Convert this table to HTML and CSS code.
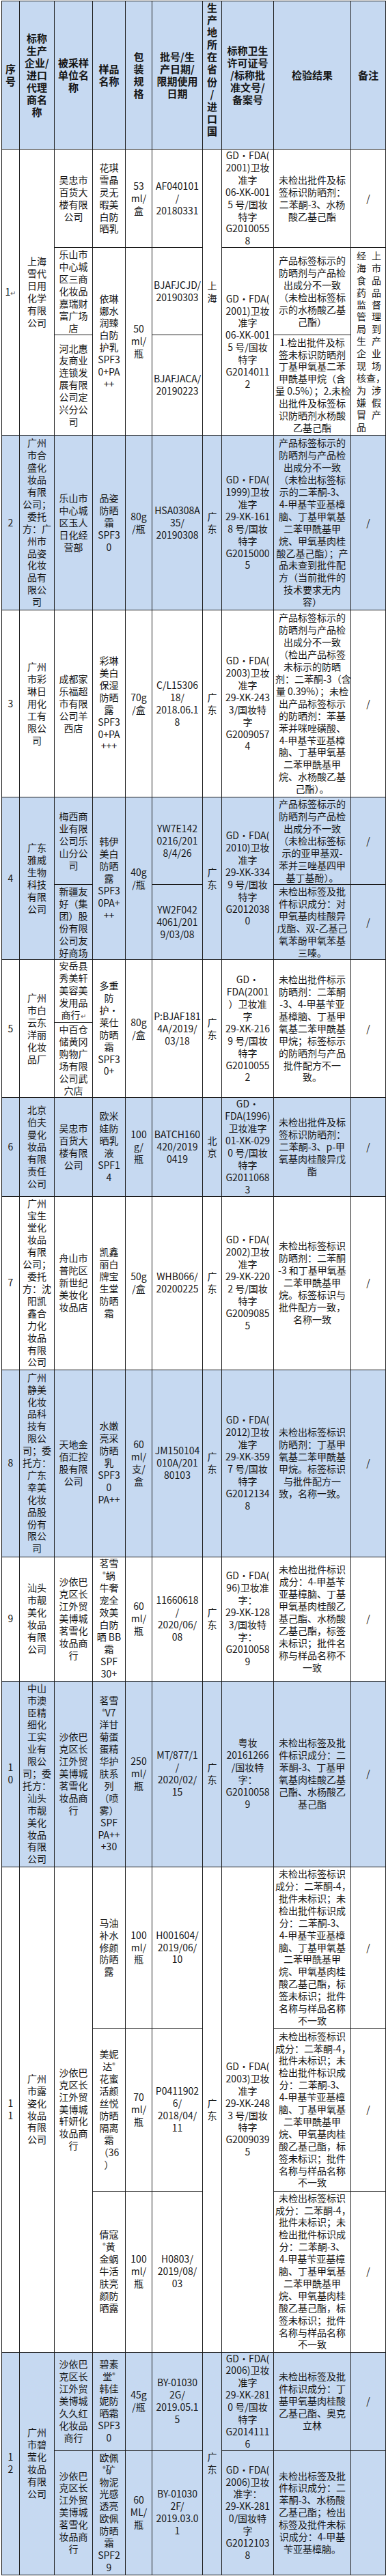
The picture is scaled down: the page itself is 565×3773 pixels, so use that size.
FILE: index.html
```html
<!DOCTYPE html>
<html lang="zh-CN">
<head>
<meta charset="utf-8">
<title>防晒化妆品抽检结果</title>
<link rel="stylesheet" href="styles.css">
</head>
<body>
<div class="page">
<table class="report">
<colgroup>
<col class="c-no"><col class="c-maker"><col class="c-unit"><col class="c-name"><col class="c-pack"><col class="c-batch"><col class="c-prov"><col class="c-lic"><col class="c-result"><col class="c-note">
</colgroup>
<thead>
<tr class="h-head">
<th>序<br>号</th>
<th>标称<br>生产<br>企业/<br>进口<br>代理<br>商名<br>称</th>
<th>被采样<br>单位名<br>称</th>
<th>样品<br>名称</th>
<th>包<br>装<br>规<br>格</th>
<th>批号/生<br>产日期/<br>限期使用<br>日期</th>
<th class="top">生<br>产<br>地<br>所<br>在<br>省<br>份<br>/<br>进<br>口<br>国</th>
<th>标称卫生<br>许可证号<br>/标称批<br>准文号/<br>备案号</th>
<th>检验结果</th>
<th>备注</th>
</tr>
</thead>
<tbody>
<!-- 1 -->
<tr class="h-1a">
<td rowspan="3">1<span class="mark">↵</span></td>
<td rowspan="3">上海<br>雪代<br>日用<br>化学<br>有限<br>公司</td>
<td>吴忠市<br>百货大<br>楼有限<br>公司</td>
<td>花琪<br>雪晶<br>灵无<br>暇美<br>白防<br>晒乳</td>
<td>53<br>ml/<br>盒</td>
<td>AF040101<br>/<br>20180331</td>
<td rowspan="3">上<br>海</td>
<td>GD・FDA(<br>2001)卫妆<br>准字<br>06-XK-001<br>5 号/国妆<br>特字<br>G2010055<br>8</td>
<td>未检出批件及标<br>签标识防晒剂：<br>二苯酮-3、水杨<br>酸乙基己酯</td>
<td>/</td>
</tr>
<tr class="h-1b">
<td>乐山市<br>中心城<br>区三商<br>化妆品<br>嘉瑞财<br>富广场<br>店</td>
<td rowspan="2">依琳<br>娜水<br>润臻<br>白防<br>护乳<br>SPF3<br>0+PA<br>++</td>
<td rowspan="2">50<br>ml/<br>瓶</td>
<td>BJAFJCJD/<br>20190303</td>
<td rowspan="2">GD・FDA(<br>2001)卫妆<br>准字<br>06-XK-001<br>5 号/国妆<br>特字<br>G2014011<br>2</td>
<td>产品标签标示的<br>防晒剂与产品检<br>出成分不一致<br>（未检出标签标<br>示的水杨酸乙基<br>己酯）</td>
<td rowspan="2" class="note-spread">
<div class="spread"><span>经</span><span>上</span></div>
<div class="spread"><span>海</span><span>市</span></div>
<div class="spread"><span>食</span><span>品</span></div>
<div class="spread"><span>药</span><span>品</span></div>
<div class="spread"><span>监</span><span>督</span></div>
<div class="spread"><span>管</span><span>理</span></div>
<div class="spread"><span>局</span><span>到</span></div>
<div class="spread"><span>生</span><span>产</span></div>
<div class="spread"><span>企</span><span>业</span></div>
<div class="spread"><span>现</span><span>场</span></div>
<div class="spread"><span>核</span><span>查，</span></div>
<div class="spread"><span>为</span><span>涉</span></div>
<div class="spread"><span>嫌</span><span>假</span></div>
<div class="spread"><span>冒</span><span>产</span></div>
<div class="spread"><span>品</span></div>
</td>
</tr>
<tr class="h-1c">
<td>河北惠<br>友商业<br>连锁发<br>展有限<br>公司定<br>兴分公<br>司</td>
<td>BJAFJACA/<br>20190223</td>
<td>1.检出批件及标<br>签未标识防晒剂<br>丁基甲氧基二苯<br>甲酰基甲烷（含<br>量 0.5%）；2.未检<br>出批件及标签标<br>识防晒剂水杨酸<br>乙基己酯</td>
</tr>
<!-- 2 -->
<tr class="alt h-2">
<td>2</td>
<td>广州<br>市合<br>盛化<br>妆品<br>有限<br>公司；<br>委托<br>方：广<br>州市<br>品姿<br>化妆<br>品有<br>限公<br>司</td>
<td>乐山市<br>中心城<br>区玉人<br>日化经<br>营部</td>
<td>品姿<br>防晒<br>霜<br>SPF3<br>0</td>
<td>80g<br>/瓶</td>
<td>HSA0308A<br>35/<br>20190308</td>
<td>广<br>东</td>
<td>GD・FDA(<br>1999)卫妆<br>准字<br>29-XK-161<br>8 号/国妆<br>特字<br>G2015000<br>5</td>
<td>产品标签标示的<br>防晒剂与产品检<br>出成分不一致<br>（未检出标签标<br>示的二苯酮-3、<br>4-甲基苄亚基樟<br>脑、丁基甲氧基<br>二苯甲酰基甲<br>烷、甲氧基肉桂<br>酸乙基己酯）；产<br>品未查到批件配<br>方（当前批件的<br>技术要求无内<br>容）</td>
<td>/</td>
</tr>
<!-- 3 -->
<tr class="h-3">
<td>3</td>
<td>广州<br>市彩<br>琳日<br>用化<br>工有<br>限公<br>司</td>
<td>成都家<br>乐福超<br>市有限<br>公司羊<br>西店</td>
<td>彩琳<br>美白<br>保湿<br>防晒<br>露<br>SPF3<br>0+PA<br>+++</td>
<td>70g<br>/盒</td>
<td>C/L15306<br>18/<br>2018.06.1<br>8</td>
<td>广<br>东</td>
<td>GD・FDA(<br>2003)卫妆<br>准字<br>29-XK-243<br>3/国妆特<br>字<br>G2009057<br>4</td>
<td>产品标签标示的<br>防晒剂与产品检<br>出成分不一致<br>（检出产品标签<br>未标示的防晒<br>剂：二苯酮-3（含<br>量 0.39%）；未检<br>出产品标签标示<br>的防晒剂：苯基<br>苯并咪唑磺酸、<br>4-甲基苄亚基樟<br>脑、丁基甲氧基<br>二苯甲酰基甲<br>烷、水杨酸乙基<br>己酯）。</td>
<td>/</td>
</tr>
<!-- 4 -->
<tr class="alt h-4a">
<td rowspan="2">4</td>
<td rowspan="2">广东<br>雅威<br>生物<br>科技<br>有限<br>公司</td>
<td>梅西商<br>业有限<br>公司乐<br>山分公<br>司</td>
<td rowspan="2">韩伊<br>美白<br>防晒<br>露<br>SPF3<br>0PA+<br>++</td>
<td rowspan="2">40g<br>/瓶</td>
<td>YW7E142<br>0216/201<br>8/4/26</td>
<td rowspan="2">广<br>东</td>
<td rowspan="2">GD・FDA(<br>2010)卫妆<br>准字<br>29-XK-334<br>9 号/国妆<br>特字<br>G2012038<br>0</td>
<td>产品标签标示的<br>防晒剂与产品检<br>出成分不一致<br>（未检出标签标<br>示的亚甲基双-<br>苯并三唑基四甲<br>基丁基酚）。</td>
<td>/</td>
</tr>
<tr class="alt h-4b">
<td>新疆友<br>好（集<br>团）股<br>份有限<br>公司友<br>好商场</td>
<td>YW2F042<br>4061/201<br>9/03/08</td>
<td>未检出标签及批<br>件标识成分：对<br>甲氧基肉桂酸异<br>戊酯、双-乙基己<br>氧苯酚甲氧苯基<br>三嗪。</td>
<td>/</td>
</tr>
<!-- 5 -->
<tr class="h-5a">
<td rowspan="2">5</td>
<td rowspan="2">广州<br>市白<br>云东<br>洋丽<br>化妆<br>品厂</td>
<td>安岳县<br>秀美轩<br>美容美<br>发用品<br>商行<span class="mark">↵</span></td>
<td rowspan="2">多重<br>防<br>护・<br>莱仕<br>防晒<br>霜<br>SPF3<br>0+</td>
<td rowspan="2">80g<br>/盒</td>
<td rowspan="2">P:BJAF181<br>4A/2019/<br>03/18</td>
<td rowspan="2">广<br>东</td>
<td rowspan="2">GD・<br>FDA(2001<br>）卫妆准<br>字<br>29-XK-216<br>9 号/国妆<br>特字<br>G2010055<br>2</td>
<td rowspan="2">未检出批件标示<br>防晒剂：二苯酮<br>-3、4-甲基苄亚<br>基樟脑、丁基甲<br>氧基二苯甲酰基<br>甲烷；标签标示<br>的防晒剂与产品<br>批件配方不一<br>致。</td>
<td rowspan="2">/</td>
</tr>
<tr class="h-5b">
<td>中百仓<br>储黄冈<br>购物广<br>场有限<br>公司武<br>穴店</td>
</tr>
<!-- 6 -->
<tr class="alt h-6">
<td>6</td>
<td>北京<br>伯夫<br>曼化<br>妆品<br>有限<br>责任<br>公司</td>
<td>吴忠市<br>百货大<br>楼有限<br>公司</td>
<td>欧米<br>娃防<br>晒乳<br>液<br>SPF1<br>4</td>
<td>100<br>g/<br>瓶</td>
<td>BATCH160<br>420/2019<br>0419</td>
<td>北<br>京</td>
<td>GD・<br>FDA(1996)<br>卫妆准字<br>01-XK-029<br>0 号/国妆<br>特字<br>G2011068<br>3</td>
<td>未检出批件及标<br>签标识防晒剂：<br>二苯酮-3、p-甲<br>氧基肉桂酸异戊<br>酯</td>
<td>/</td>
</tr>
<!-- 7 -->
<tr class="h-7">
<td>7</td>
<td>广州<br>宝生<br>堂化<br>妆品<br>有限<br>公司；<br>委托<br>方：沈<br>阳凯<br>鑫合<br>力化<br>妆品<br>有限<br>公司</td>
<td>舟山市<br>普陀区<br>新世纪<br>美妆化<br>妆品店</td>
<td>凯鑫<br>丽白<br>牌宝<br>生堂<br>防晒<br>霜</td>
<td>50g<br>/盒</td>
<td>WHB066/<br>20200225</td>
<td>广<br>东</td>
<td>GD・FDA(<br>2002)卫妆<br>准字<br>29-XK-220<br>2 号/国妆<br>特字<br>G2009085<br>5</td>
<td>未检出标签标识<br>防晒剂：二苯酮<br>-3 和丁基甲氧基<br>二苯甲酰基甲<br>烷。标签标识与<br>批件配方一致，<br>名称一致</td>
<td>/</td>
</tr>
<!-- 8 -->
<tr class="alt h-8">
<td>8</td>
<td>广州<br>静美<br>化妆<br>品科<br>技有<br>限公<br>司；委<br>托方：<br>广东<br>幸美<br>化妆<br>品股<br>份有<br>限公<br>司</td>
<td>天地金<br>佰汇控<br>股有限<br>公司</td>
<td>水嫩<br>亮采<br>防晒<br>乳<br>SPF3<br>0<br>PA++</td>
<td>60<br>ml/<br>支/<br>盒</td>
<td>JM150104<br>010A/201<br>80103</td>
<td>广<br>东</td>
<td>GD・FDA(<br>2012)卫妆<br>准字<br>29-XK-359<br>7 号/国妆<br>特字<br>G2012134<br>8</td>
<td>未检出标签标识<br>防晒剂：丁基甲<br>氧基二苯甲酰基<br>甲烷。标签标识<br>与批件配方一<br>致，名称一致。</td>
<td>/</td>
</tr>
<!-- 9 -->
<tr class="h-9">
<td>9</td>
<td>汕头<br>市靓<br>美化<br>妆品<br>有限<br>公司</td>
<td>沙依巴<br>克区长<br>江外贸<br>美博城<br>茗雪化<br>妆品商<br>行</td>
<td>茗雪<br><span class="reg">®</span>蜗<br>牛奢<br>宠全<br>效美<br>白防<br>晒 BB<br>霜<br>SPF<br>30+</td>
<td>60<br>ml/<br>瓶</td>
<td>11660618<br>/<br>2020/06/<br>08</td>
<td>广<br>东</td>
<td>GD・FDA(<br>96)卫妆准<br>字：<br>29-XK-128<br>3/国妆特<br>字：<br>G2010058<br>9</td>
<td>未检出批件标识<br>成分：4-甲基苄<br>亚基樟脑、丁基<br>甲氧基肉桂酸乙<br>基己酯、水杨酸<br>乙基己酯，标签<br>未标识；批件名<br>称与样品名称不<br>一致</td>
<td>/</td>
</tr>
<!-- 10 -->
<tr class="alt h-10">
<td>1<br>0</td>
<td>中山<br>市澳<br>臣精<br>细化<br>工实<br>业有<br>限公<br>司；委<br>托方：<br>汕头<br>市靓<br>美化<br>妆品<br>有限<br>公司</td>
<td>沙依巴<br>克区长<br>江外贸<br>美博城<br>茗雪化<br>妆品商<br>行</td>
<td>茗雪<br><span class="reg">®</span>V7<br>洋甘<br>菊蛋<br>蛋精<br>华护<br>肤系<br>列<br>（喷<br>雾）<br>SPF<br>PA++<br>+30</td>
<td>250<br>ml/<br>瓶</td>
<td>MT/877/1<br>/<br>2020/02/<br>15</td>
<td>广<br>东</td>
<td>粤妆<br>20161266<br>/国妆特<br>字：<br>G2010058<br>9</td>
<td>未检出标签及批<br>件标识成分：二<br>苯酮-3、丁基甲<br>氧基肉桂酸乙基<br>己酯、水杨酸乙<br>基己酯</td>
<td>/</td>
</tr>
<!-- 11 -->
<tr class="h-11a">
<td rowspan="3">1<br>1</td>
<td rowspan="3">广州<br>市露<br>姿化<br>妆品<br>有限<br>公司</td>
<td rowspan="3">沙依巴<br>克区长<br>江外贸<br>美博城<br>轩妍化<br>妆品商<br>行</td>
<td>马油<br>补水<br>修颜<br>防晒<br>露</td>
<td>100<br>ml/<br>瓶</td>
<td>H001604/<br>2019/06/<br>10</td>
<td rowspan="3">广<br>东</td>
<td rowspan="3">GD・FDA(<br>2003)卫妆<br>准字<br>29-XK-248<br>3 号/国妆<br>特字<br>G2009039<br>5</td>
<td>未检出标签标识<br>成分：二苯酮-4，<br>批件未标识；未<br>检出批件标识成<br>分：二苯酮-3、<br>4-甲基苄亚基樟<br>脑、丁基甲氧基<br>二苯甲酰基甲<br>烷、甲氧基肉桂<br>酸乙基己酯，标<br>签未标识；批件<br>名称与样品名称<br>不一致</td>
<td>/</td>
</tr>
<tr class="h-11b">
<td>美妮<br>达<span class="reg">®</span><br>花蜜<br>活颜<br>丝悦<br>防晒<br>隔离<br>霜<br>（36<br>）</td>
<td>70<br>ml/<br>瓶</td>
<td>P0411902<br>6/<br>2018/04/<br>11</td>
<td>未检出标签标识<br>成分：二苯酮-4，<br>批件未标识；未<br>检出批件标识成<br>分：二苯酮-3、<br>4-甲基苄亚基樟<br>脑、丁基甲氧基<br>二苯甲酰基甲<br>烷、甲氧基肉桂<br>酸乙基己酯，标<br>签未标识；批件<br>名称与样品名称<br>不一致</td>
<td>/</td>
</tr>
<tr class="h-11c">
<td>倩寇<br><span class="reg">®</span>黄<br>金蜗<br>牛活<br>肤亮<br>颜防<br>晒露</td>
<td>100<br>ml/<br>瓶</td>
<td>H0803/<br>2019/08/<br>03</td>
<td>未检出标签标识<br>成分：二苯酮-4，<br>批件未标识；未<br>检出批件标识成<br>分：二苯酮-3、<br>4-甲基苄亚基樟<br>脑、丁基甲氧基<br>二苯甲酰基甲<br>烷、甲氧基肉桂<br>酸乙基己酯，标<br>签未标识；批件<br>名称与样品名称<br>不一致</td>
<td>/</td>
</tr>
<!-- 12 -->
<tr class="alt h-12a">
<td rowspan="2">1<br>2</td>
<td rowspan="2">广州<br>市碧<br>莹化<br>妆品<br>有限<br>公司</td>
<td>沙依巴<br>克区长<br>江外贸<br>美博城<br>久久红<br>化妆品<br>商行</td>
<td>碧素<br>堂<span class="reg">®</span><br>韩佳<br>妮防<br>晒霜<br>SPF3<br>0</td>
<td>45g<br>/瓶</td>
<td>BY-01030<br>2G/<br>2019.05.1<br>5</td>
<td rowspan="2">广<br>东</td>
<td>GD・FDA(<br>2006)卫妆<br>准字<br>29-XK-281<br>0 号/国妆<br>特字<br>G2014111<br>6</td>
<td>未检出标签及批<br>件标识成分：丁<br>基甲氧基肉桂酸<br>乙基己酯、奥克<br>立林</td>
<td>/</td>
</tr>
<tr class="alt h-12b">
<td>沙依巴<br>克区长<br>江外贸<br>美博城<br>茗雪化<br>妆品商<br>行</td>
<td>欧佩<br><span class="reg">®</span>矿<br>物泥<br>光感<br>透亮<br>欧佩<br>防晒<br>霜<br>SPF2<br>9</td>
<td>60<br>ML/<br>瓶</td>
<td>BY-01030<br>2F/<br>2019.03.0<br>1</td>
<td>GD・FDA(<br>2006)卫妆<br>准字：<br>29-XK-281<br>0/国妆特<br>字<br>G2012103<br>8</td>
<td>未检出标签及批<br>件标识成分：二<br>苯酮-3、水杨酸<br>乙基己酯；检出<br>标签及批件未标<br>识成分：4-甲基<br>苄亚基樟脑。</td>
<td></td>
</tr>
</tbody>
</table>
</div>
</body>
</html>
```

FILE: styles.css
```css
html, body {
  margin: 0;
  padding: 0;
  background: #ffffff;
}

body {
  font-family: "Noto Sans CJK SC", "Noto Sans", sans-serif;
  color: #151515;
}

.page {
  padding: 1px 0 0 2px;
}

.report {
  border-collapse: collapse;
  table-layout: fixed;
  width: 562px;
  font-size: 14px;
  line-height: 17.9px;
}

.report th,
.report td {
  border: 1px solid #1c1c1c;
  padding: 0 2px;
  text-align: center;
  vertical-align: middle;
  white-space: nowrap;
  overflow: visible;
}

.report thead th {
  background: #c6d9f1;
  font-weight: 700;
  font-size: 15px;
  line-height: 18.1px;
}

.report thead th.top {
  vertical-align: top;
}

.report tr.alt td {
  background: #c6d9f1;
}

/* column widths */
.c-no { width: 26px; }
.c-maker { width: 51px; }
.c-unit { width: 56px; }
.c-name { width: 48px; }
.c-pack { width: 39px; }
.c-batch { width: 74px; }
.c-prov { width: 28px; }
.c-lic { width: 76px; }
.c-result { width: 113px; }
.c-note { width: 51px; }

/* row heights */
.h-head { height: 217px; }
.h-1a { height: 143px; }
.h-1b { height: 128px; }
.h-1c { height: 147px; }
.h-2 { height: 256px; }
.h-3 { height: 274px; }
.h-4a { height: 128px; }
.h-4b { height: 110px; }
.h-5a { height: 92px; }
.h-5b { height: 110px; }
.h-6 { height: 143px; }
.h-7 { height: 254px; }
.h-8 { height: 274px; }
.h-9 { height: 182px; }
.h-10 { height: 272px; }
.h-11a { height: 237px; }
.h-11b { height: 238px; }
.h-11c { height: 236px; }
.h-12a { height: 143px; }
.h-12b { height: 182px; }

/* small marks */
.mark {
  font-size: 10px;
  color: #555555;
}

.reg {
  font-size: 9px;
  line-height: 1;
  vertical-align: 4px;
}

/* justified remark column (two characters per line) */
.report td.note-spread {
  padding: 0 6px 0 8px;
}

.spread {
  display: flex;
  justify-content: space-between;
}
```
